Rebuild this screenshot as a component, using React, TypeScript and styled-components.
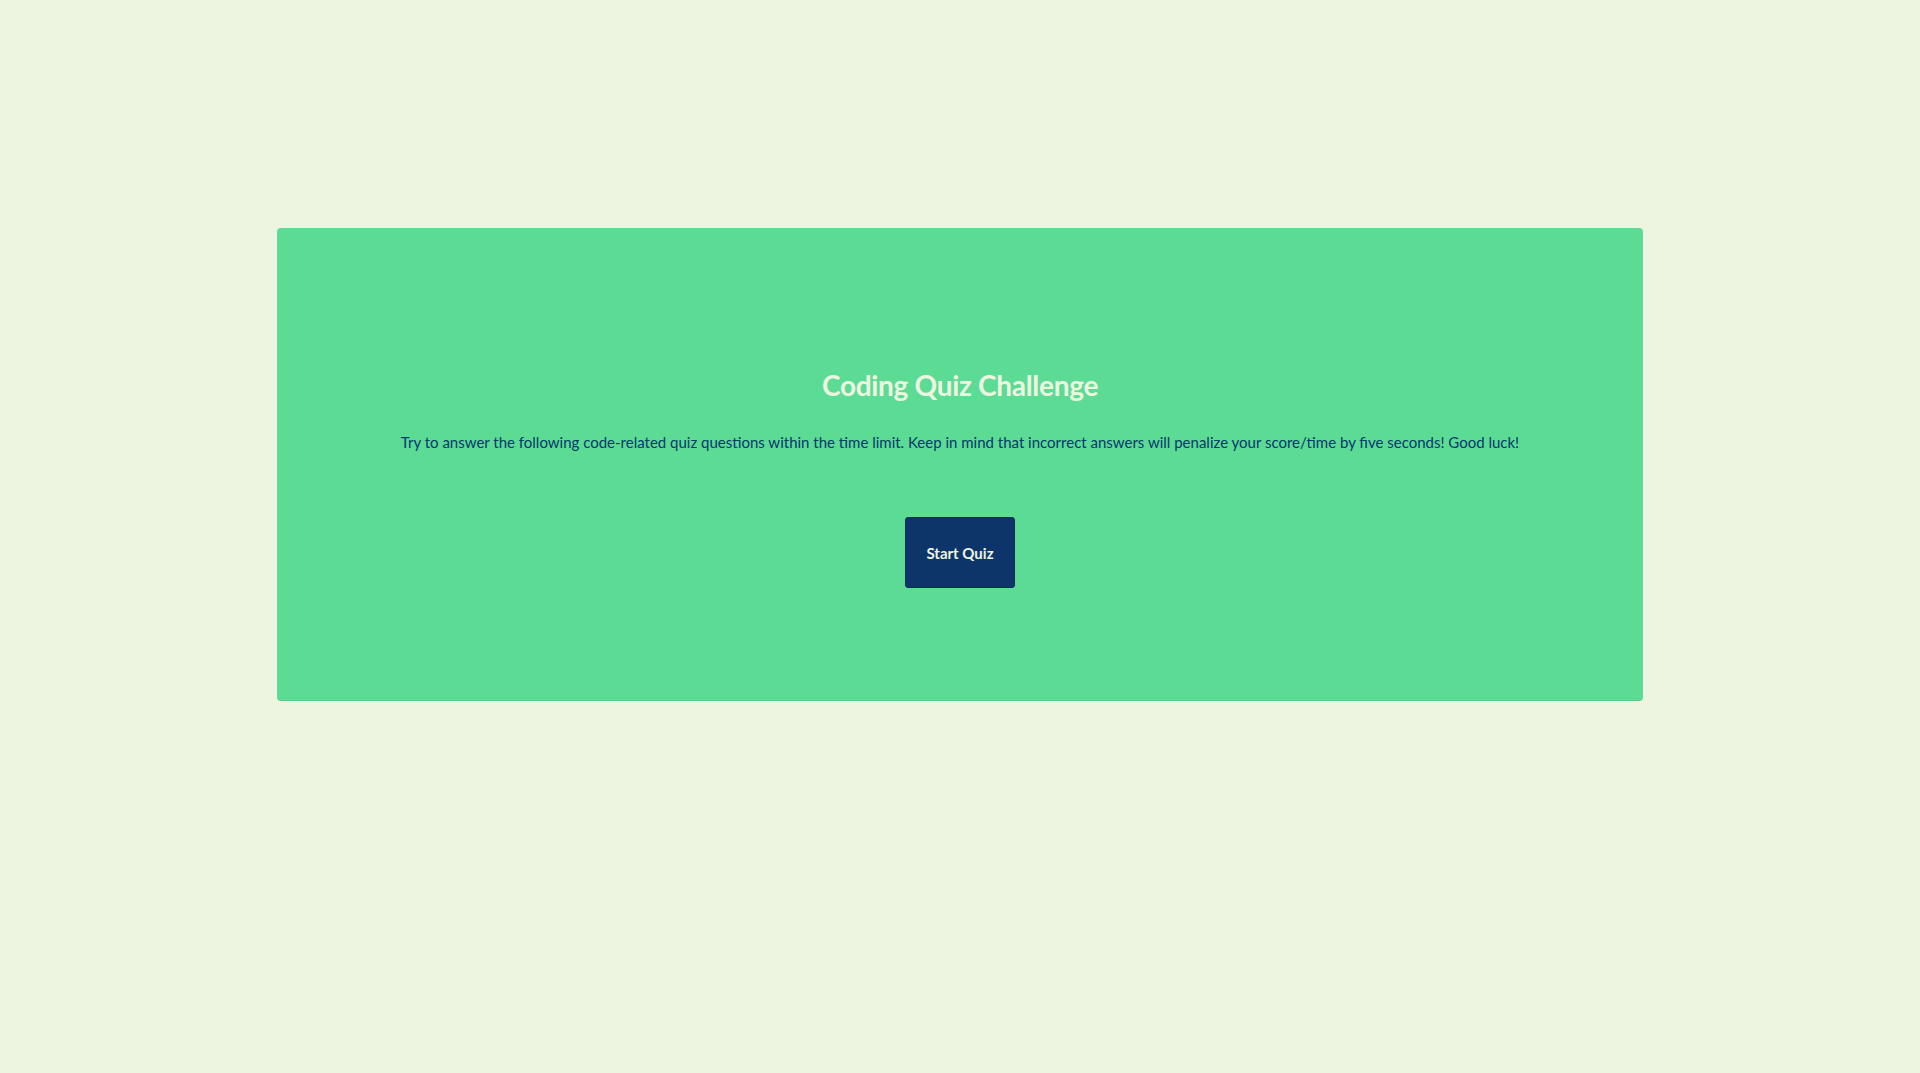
import React from "react";
import styled, { createGlobalStyle } from "styled-components";

const GlobalStyle = createGlobalStyle`
  html, body {
    margin: 0;
    padding: 0;
    background: #edf5e1;
    font-family: "Lato", "Open Sans", sans-serif;
  }
`;

const Page = styled.main`
  display: flex;
  justify-content: center;
  align-items: flex-start;
  padding-top: 228px;
  min-height: 1073px;
  box-sizing: border-box;
`;

const Card = styled.section`
  width: 1366px;
  box-sizing: border-box;
  background: #5cdb95;
  border-radius: 4px;
  border-bottom: 1px solid #52d48b;
  padding: 139px 40px 112px;
  display: flex;
  flex-direction: column;
  align-items: center;
`;

const Title = styled.h1`
  margin: 0;
  font-size: 28px;
  line-height: 36px;
  font-weight: 700;
  letter-spacing: -0.3px;
  color: #edf5e1;
`;

const Intro = styled.p`
  margin: 28px 0 0;
  font-size: 15px;
  line-height: 22px;
  color: #05386b;
  text-align: center;
`;

const StartButton = styled.button`
  margin-top: 64px;
  width: 110px;
  height: 71px;
  box-sizing: border-box;
  background: #0e3569;
  color: #edf5e1;
  border: 1px solid #062c5a;
  border-radius: 3px;
  font-family: inherit;
  font-size: 15px;
  font-weight: 700;
  cursor: pointer;
`;

export default function App() {
  return (
    <>
      <GlobalStyle />
      <Page>
        <Card>
          <Title>Coding Quiz Challenge</Title>
          <Intro>
            Try to answer the following code-related quiz questions within the time limit. Keep in mind that incorrect
            answers will penalize your score/time by five seconds! Good luck!
          </Intro>
          <StartButton>Start Quiz</StartButton>
        </Card>
      </Page>
    </>
  );
}
